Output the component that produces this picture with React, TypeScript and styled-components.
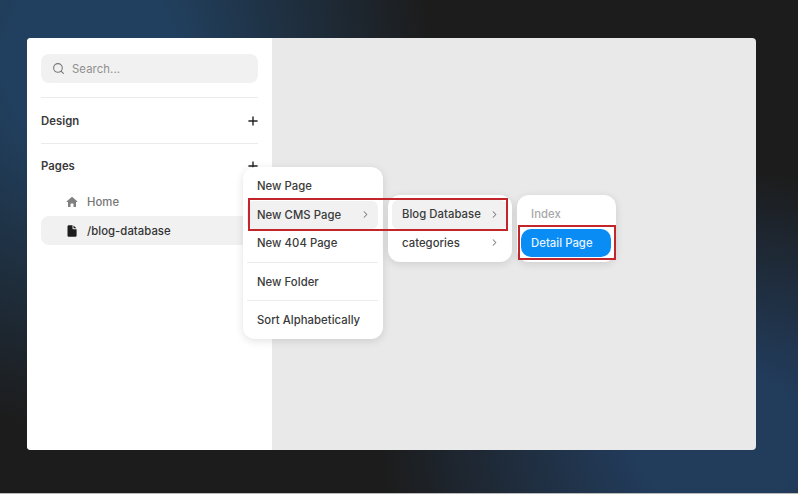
import React from 'react';
import styled, { createGlobalStyle } from 'styled-components';
import { LuChevronRight, LuPlus, LuSearch } from 'react-icons/lu';

const GlobalStyle = createGlobalStyle`
    html, body {
        margin: 0;
        padding: 0;
        height: 100%;
    }
    body {
        font-family: Inter, "Liberation Sans", sans-serif;
        overflow: hidden;
    }
`;

const Stage = styled.div`
    box-sizing: border-box;
    width: 798px;
    height: 494px;
    padding: 38px 42px 43px 27px;
    border-bottom: 1px solid #b9b9b9;
    background:
        radial-gradient(ellipse 340px 370px at 90px 60px, #21405f 0%, #21405f 25%, #20395400 100%),
        radial-gradient(ellipse 340px 270px at 720px 440px, #223c5c 0%, #223c5c 25%, #20395400 100%),
        #1c1c1c;
`;

const Window = styled.div`
    position: relative;
    display: flex;
    height: 412px;
    border-radius: 4px;
    overflow: hidden;
    background: #e9e9e9;
`;

const Sidebar = styled.aside`
    box-sizing: border-box;
    display: flex;
    flex-direction: column;
    width: 245px;
    padding: 16px 14px;
    background: #fff;
`;

const SearchBox = styled.div`
    display: flex;
    align-items: center;
    gap: 7px;
    height: 29px;
    padding: 0 11px;
    border-radius: 8px;
    background: #f1f1f1;
    color: #8f8f8f;
    font-size: 11.3px;
    letter-spacing: 0.1px;
`;

const Section = styled.div<{ $first?: boolean }>`
    display: flex;
    align-items: center;
    justify-content: space-between;
    height: ${(p) => (p.$first ? '45px' : '43px')};
    margin-top: ${(p) => (p.$first ? '14px' : '0')};
    border-top: 1px solid #ebebeb;
    color: #3a3a3a;
    font-size: 11.3px;
    font-weight: 600;
    letter-spacing: 0.05px;

    svg {
        margin-right: -2px;
        color: #222;
        stroke-width: 2.4;
    }
`;

const PageList = styled.div`
    display: flex;
    flex-direction: column;
`;

const PageRow = styled.div<{ $active?: boolean }>`
    display: flex;
    align-items: center;
    gap: 9px;
    height: 29px;
    padding-left: 25px;
    border-radius: 8px;
    background: ${(p) => (p.$active ? '#f1f1f1' : 'transparent')};
    color: ${(p) => (p.$active ? '#333' : '#757575')};
    font-size: 11.3px;
    font-weight: 500;
    letter-spacing: 0.05px;

    svg {
        width: 12px;
        height: 12px;
        fill: ${(p) => (p.$active ? '#1d1d1d' : '#808080')};
    }
`;

const Canvas = styled.main`
    flex: 1;
`;

const Menu = styled.div<{ $left: number; $top: number; $width: number }>`
    position: absolute;
    left: ${(p) => p.$left}px;
    top: ${(p) => p.$top}px;
    box-sizing: border-box;
    display: flex;
    flex-direction: column;
    width: ${(p) => p.$width}px;
    padding: 5px 5px 4.5px 4px;
    border-radius: 12px;
    background: #fff;
    box-shadow: 0 2px 8px rgba(0, 0, 0, 0.12);
`;

const MenuItem = styled.div<{ $hover?: boolean; $muted?: boolean; $selected?: boolean }>`
    display: flex;
    align-items: center;
    justify-content: space-between;
    height: 28.5px;
    flex: none;
    padding: 0 10px;
    border-radius: ${(p) => (p.$selected ? '10px' : '6px')};
    background: ${(p) => (p.$selected ? '#0a8cf5' : p.$hover ? '#f1f1f1' : 'transparent')};
    color: ${(p) => (p.$selected ? '#e6f4ff' : p.$muted ? '#a9a9a9' : '#3a3a3a')};
    font-size: 11.3px;
    font-weight: 500;
    letter-spacing: 0.05px;

    svg {
        margin-right: -3px;
        color: #7a7a7a;
        stroke-width: 2.2;
    }
`;

const MenuDivider = styled.div`
    flex: none;
    height: 1px;
    margin: 4px 0 5px;
    background: #ececec;
`;

const Callout = styled.div<{ $left: number; $top: number; $width: number; $height: number }>`
    position: absolute;
    left: ${(p) => p.$left}px;
    top: ${(p) => p.$top}px;
    box-sizing: border-box;
    width: ${(p) => p.$width}px;
    height: ${(p) => p.$height}px;
    border: 2px solid #c2262b;
    pointer-events: none;
`;

function HomeIcon() {
    return (
        <svg viewBox="0 0 12 12">
            <path d="M6 .8 11.200 5.200c.3.3.1.8-.3.8H10v4.400c0 .4-.3.7-.7.7H7.500V8a.5.5 0 0 0-.5-.5H5a.5.5 0 0 0-.5.5v3.100H2.700c-.4 0-.7-.3-.7-.7V6H1.100c-.4 0-.6-.5-.3-.8Z" />
        </svg>
    );
}

function FileIcon() {
    return (
        <svg viewBox="0 0 12 12">
            <path d="M2.800.2h3.700v3.100c0 .6.4 1 1 1h3.100v6.200c0 .7-.6 1.300-1.300 1.300H2.800c-.7 0-1.300-.6-1.300-1.300V1.500C1.500.8 2.100.2 2.800.2ZM7.500.4l2.900 2.900H7.500Z" />
        </svg>
    );
}

export default function App() {
    return (
        <Stage>
            <GlobalStyle />
            <Window>
                <Sidebar>
                    <SearchBox>
                        <LuSearch size={13} color="#777" />
                        Search...
                    </SearchBox>
                    <Section $first>
                        Design
                        <LuPlus size={14} />
                    </Section>
                    <Section>
                        Pages
                        <LuPlus size={14} />
                    </Section>
                    <PageList>
                        <PageRow>
                            <HomeIcon />
                            Home
                        </PageRow>
                        <PageRow $active>
                            <FileIcon />
                            /blog-database
                        </PageRow>
                    </PageList>
                </Sidebar>
                <Canvas />

                <Menu $left={216} $top={129} $width={140}>
                    <MenuItem>New Page</MenuItem>
                    <MenuItem $hover>
                        New CMS Page
                        <LuChevronRight size={11} />
                    </MenuItem>
                    <MenuItem>New 404 Page</MenuItem>
                    <MenuDivider />
                    <MenuItem>New Folder</MenuItem>
                    <MenuDivider />
                    <MenuItem>Sort Alphabetically</MenuItem>
                </Menu>

                <Menu $left={361} $top={157} $width={124}>
                    <MenuItem $hover>
                        Blog Database
                        <LuChevronRight size={11} />
                    </MenuItem>
                    <MenuItem>
                        categories
                        <LuChevronRight size={11} />
                    </MenuItem>
                </Menu>

                <Menu $left={490} $top={157} $width={99}>
                    <MenuItem $muted>Index</MenuItem>
                    <MenuItem $selected>Detail Page</MenuItem>
                </Menu>

                <Callout $left={221} $top={160} $width={260} $height={33} />
                <Callout $left={491} $top={187} $width={98} $height={35} />
            </Window>
        </Stage>
    );
}
